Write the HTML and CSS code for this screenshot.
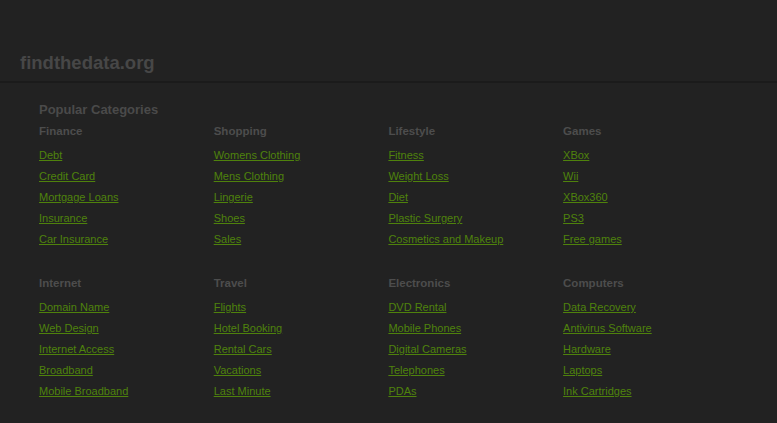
FILE: index.html
```html
<!DOCTYPE html>
<html lang="en">
<head>
    <meta charset="UTF-8">
    <title>findthedata.org</title>
    <link rel="stylesheet" href="styles.css">
</head>
<body>
<div class="header">
    <a class="logo" href="#">findthedata.org</a>
</div>

<div class="content">
    <h2>Popular Categories</h2>

    <div class="categories">
        <div class="category">
            <h3>Finance</h3>
            <ul>
                <li><a href="#">Debt</a></li>
                <li><a href="#">Credit Card</a></li>
                <li><a href="#">Mortgage Loans</a></li>
                <li><a href="#">Insurance</a></li>
                <li><a href="#">Car Insurance</a></li>
            </ul>
        </div>
        <div class="category">
            <h3>Shopping</h3>
            <ul>
                <li><a href="#">Womens Clothing</a></li>
                <li><a href="#">Mens Clothing</a></li>
                <li><a href="#">Lingerie</a></li>
                <li><a href="#">Shoes</a></li>
                <li><a href="#">Sales</a></li>
            </ul>
        </div>
        <div class="category">
            <h3>Lifestyle</h3>
            <ul>
                <li><a href="#">Fitness</a></li>
                <li><a href="#">Weight Loss</a></li>
                <li><a href="#">Diet</a></li>
                <li><a href="#">Plastic Surgery</a></li>
                <li><a href="#">Cosmetics and Makeup</a></li>
            </ul>
        </div>
        <div class="category">
            <h3>Games</h3>
            <ul>
                <li><a href="#">XBox</a></li>
                <li><a href="#">Wii</a></li>
                <li><a href="#">XBox360</a></li>
                <li><a href="#">PS3</a></li>
                <li><a href="#">Free games</a></li>
            </ul>
        </div>

        <div class="category">
            <h3>Internet</h3>
            <ul>
                <li><a href="#">Domain Name</a></li>
                <li><a href="#">Web Design</a></li>
                <li><a href="#">Internet Access</a></li>
                <li><a href="#">Broadband</a></li>
                <li><a href="#">Mobile Broadband</a></li>
            </ul>
        </div>
        <div class="category">
            <h3>Travel</h3>
            <ul>
                <li><a href="#">Flights</a></li>
                <li><a href="#">Hotel Booking</a></li>
                <li><a href="#">Rental Cars</a></li>
                <li><a href="#">Vacations</a></li>
                <li><a href="#">Last Minute</a></li>
            </ul>
        </div>
        <div class="category">
            <h3>Electronics</h3>
            <ul>
                <li><a href="#">DVD Rental</a></li>
                <li><a href="#">Mobile Phones</a></li>
                <li><a href="#">Digital Cameras</a></li>
                <li><a href="#">Telephones</a></li>
                <li><a href="#">PDAs</a></li>
            </ul>
        </div>
        <div class="category">
            <h3>Computers</h3>
            <ul>
                <li><a href="#">Data Recovery</a></li>
                <li><a href="#">Antivirus Software</a></li>
                <li><a href="#">Hardware</a></li>
                <li><a href="#">Laptops</a></li>
                <li><a href="#">Ink Cartridges</a></li>
            </ul>
        </div>
    </div>
</div>
</body>
</html>
```

FILE: styles.css
```css
* {
    margin: 0;
    padding: 0;
    box-sizing: border-box;
}

body {
    background: #222222;
    font-family: 'Liberation Sans', Arial, sans-serif;
    color: #4b4b4b;
}

/* header */
.header {
    height: 83px;
    padding: 52px 0 0 20px;
    border-bottom: 2px solid #1b1b1b;
}

.logo {
    font-size: 18.5px;
    font-weight: bold;
    line-height: 22px;
    color: #474747;
    text-decoration: none;
}

/* categories */
.content {
    padding: 19px 0 0 39px;
}

.content h2 {
    font-size: 13px;
    line-height: 16px;
    margin-bottom: 5px;
    color: #4a4a4a;
}

.categories {
    display: grid;
    grid-template-columns: repeat(4, 174.7px);
    row-gap: 25px;
}

.category h3 {
    font-size: 11.5px;
    line-height: 16px;
    margin-bottom: 6px;
    color: #4d4d4d;
}

.category ul {
    list-style: none;
}

.category li {
    font-size: 11px;
    line-height: 21px;
}

.category a {
    color: #4f820c;
}
```
